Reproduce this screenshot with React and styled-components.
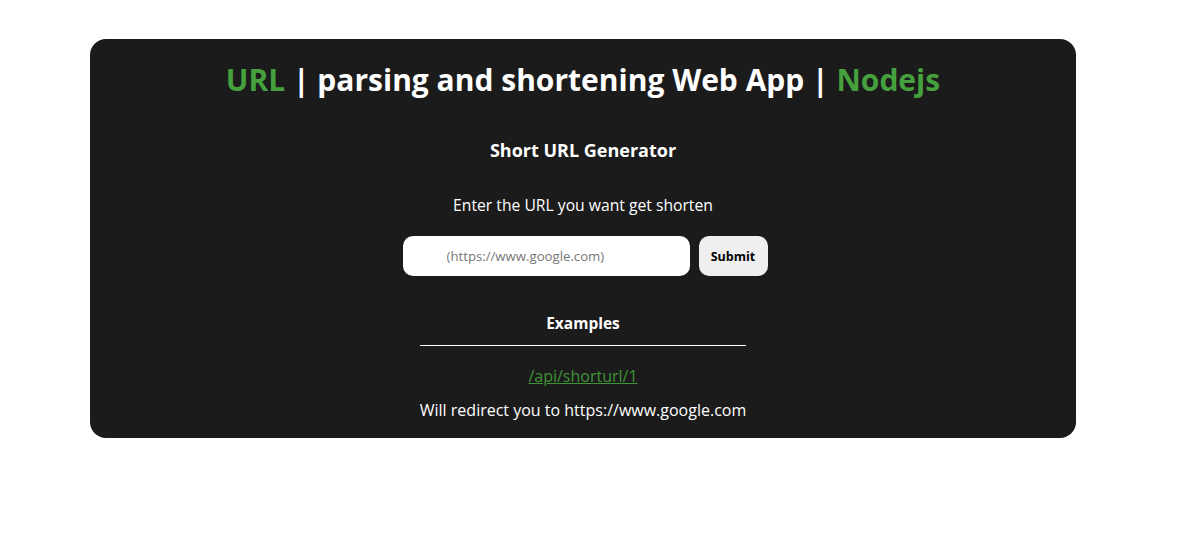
import React, { useState } from "react";
import styled, { createGlobalStyle } from "styled-components";

const GlobalStyle = createGlobalStyle`
  body {
    margin: 0;
    background: #ffffff;
    font-family: "Open Sans", "Noto Sans", sans-serif;
  }
`;

const App = () => {
  const [url, setUrl] = useState("");

  return (
    <Page>
      <GlobalStyle />
      <Card>
        <Title>
          <Accent>URL</Accent> | parsing and shortening Web App | <Accent>Nodejs</Accent>
        </Title>
        <Heading>Short URL Generator</Heading>
        <Label htmlFor="url_input">Enter the URL you want get shorten</Label>
        <Form onSubmit={(e) => e.preventDefault()}>
          <UrlInput
            id="url_input"
            type="text"
            placeholder="(https://www.google.com)"
            value={url}
            onChange={(e) => setUrl(e.target.value)}
          />
          <SubmitButton type="submit">Submit</SubmitButton>
        </Form>
        <Examples>
          <ExamplesTitle>Examples</ExamplesTitle>
          <Divider />
          <ExampleLink href="#">/api/shorturl/1</ExampleLink>
          <Note>Will redirect you to https://www.google.com</Note>
        </Examples>
      </Card>
    </Page>
  );
};

export default App;

const Page = styled.div`
  padding: 39px 107px 0 90px;
`;

const Card = styled.main`
  width: 986px;
  box-sizing: border-box;
  background: #1b1b1b;
  border-radius: 16px;
  color: #ffffff;
  display: flex;
  flex-direction: column;
  align-items: center;
  padding: 21px 0 17px;
`;

const Title = styled.h1`
  margin: 0;
  font-size: 30px;
  line-height: 40px;
  font-weight: 700;
`;

const Accent = styled.span`
  color: #45a03d;
`;

const Heading = styled.h2`
  margin: 38px 0 0;
  font-size: 18px;
  line-height: 24px;
  font-weight: 700;
`;

const Label = styled.label`
  margin-top: 32px;
  font-size: 15.7px;
  line-height: 22px;
`;

const Form = styled.form`
  margin: 20px 0 0 4px;
  display: flex;
  gap: 9px;
`;

const UrlInput = styled.input`
  width: 287px;
  height: 40px;
  box-sizing: border-box;
  border: none;
  border-radius: 10px;
  padding: 0 0 0 44px;
  font-family: inherit;
  font-size: 13.2px;
  outline: none;
  &::placeholder {
    color: #777777;
  }
`;

const SubmitButton = styled.button`
  width: 69px;
  height: 40px;
  border: none;
  border-radius: 10px;
  background: #efefef;
  color: #000000;
  font-family: inherit;
  font-size: 12.5px;
  font-weight: 700;
  cursor: pointer;
`;

const Examples = styled.section`
  margin-top: 36px;
  display: flex;
  flex-direction: column;
  align-items: center;
`;

const ExamplesTitle = styled.h3`
  margin: 0;
  font-size: 15.5px;
  line-height: 22px;
  font-weight: 700;
`;

const Divider = styled.hr`
  align-self: stretch;
  margin: 11px 0 0;
  border: none;
  border-top: 1px solid #ffffff;
`;

const ExampleLink = styled.a`
  margin-top: 19px;
  font-size: 16px;
  line-height: 22px;
  color: #3f9435;
`;

const Note = styled.p`
  margin: 12px 0 0;
  font-size: 16px;
  line-height: 22px;
`;
